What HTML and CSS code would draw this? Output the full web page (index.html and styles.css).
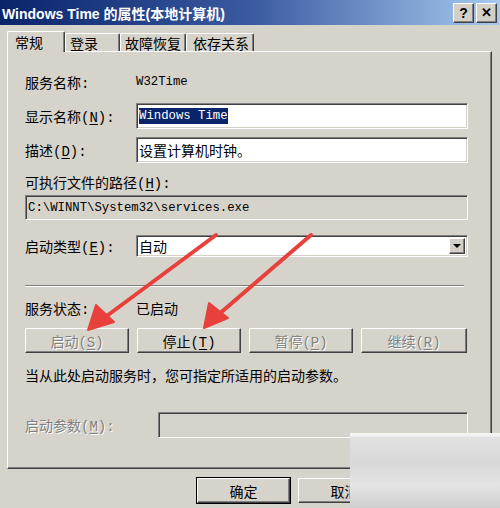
FILE: index.html
```html
<!DOCTYPE html>
<html lang="zh-CN">
<head>
    <meta charset="UTF-8">
    <title>Windows Time 的属性</title>
    <link rel="stylesheet" href="styles.css">
</head>
<body>

<div class="window">
    <div class="titlebar">
        <span class="title">Windows Time 的属性(本地计算机)</span>
        <div class="caption-buttons">
            <span class="cap-btn">?</span>
            <span class="cap-btn close">✕</span>
        </div>
    </div>

    <div class="tabs">
        <div class="tab active">常规</div>
        <div class="tab">登录</div>
        <div class="tab">故障恢复</div>
        <div class="tab">依存关系</div>
    </div>

    <div class="panel">
        <div class="row r-name">
            <span class="label">服务名称:</span>
            <span class="mono">W32Time</span>
        </div>
        <div class="row r-display">
            <span class="label">显示名称(<u>N</u>):</span>
            <div class="field"><span class="mono selected">Windows Time</span></div>
        </div>
        <div class="row r-desc">
            <span class="label">描述(<u>D</u>):</span>
            <div class="field">设置计算机时钟。</div>
        </div>
        <div class="row r-pathlabel">
            <span>可执行文件的路径(<u>H</u>):</span>
        </div>
        <div class="row r-path">
            <div class="field readonly"><span class="mono">C:\WINNT\System32\services.exe</span></div>
        </div>
        <div class="row r-type">
            <span class="label">启动类型(<u>E</u>):</span>
            <div class="field combo">
                <span>自动</span>
                <span class="drop"><span class="tri"></span></span>
            </div>
        </div>
        <div class="separator"></div>
        <div class="row r-status">
            <span class="label">服务状态:</span>
            <span>已启动</span>
        </div>
        <div class="row r-buttons">
            <button class="btn disabled">启动(<u>S</u>)</button>
            <button class="btn">停止(<u>T</u>)</button>
            <button class="btn disabled">暂停(<u>P</u>)</button>
            <button class="btn disabled wide">继续(<u>R</u>)</button>
        </div>
        <div class="row r-note">
            当从此处启动服务时，您可指定所适用的启动参数。
        </div>
        <div class="row r-params">
            <span class="label disabled-text">启动参数(<u>M</u>):</span>
            <div class="field readonly"></div>
        </div>
    </div>

    <div class="footer">
        <button class="btn dlg default">确定</button>
        <button class="btn dlg">取消</button>
        <button class="btn dlg">应用(<u>A</u>)</button>
    </div>

    <!-- red arrows pointing at the start / stop buttons -->
    <svg class="arrows" width="500" height="508" viewBox="0 0 500 508">
        <g fill="#e8413c" stroke="#e8413c" stroke-linecap="round" stroke-linejoin="round">
            <line x1="216" y1="235" x2="104" y2="318" stroke-width="4"/>
            <polygon points="88,330 96,305 114,322" stroke-width="2"/>
            <line x1="311" y1="235" x2="218" y2="315" stroke-width="4"/>
            <polygon points="204,328 209,303 228,318" stroke-width="2"/>
        </g>
    </svg>

    <div class="stamp"></div>
</div>

</body>
</html>
```

FILE: styles.css
```css
/* Win2000 style property sheet */
body { margin: 0; padding: 0; background: #d4d0c8; font-family: "Liberation Mono", "Noto Sans CJK SC", monospace; font-size: 14px; color: #000; }
u { text-decoration: underline; text-underline-offset: 2px; }
.window { position: relative; width: 500px; height: 508px; overflow: hidden; background: #d6d3ca; }

.titlebar { height: 25px; display: flex; align-items: center; justify-content: space-between; background: linear-gradient(to right, #0a246a 0%, #3a5aa0 50%, #a6caf0 100%); }
.title { color: #fff; font-family: "Liberation Sans", "Noto Sans CJK SC", sans-serif; font-weight: bold; font-size: 14px; padding-left: 2px; }
.caption-buttons { display: flex; gap: 2px; padding-right: 3px; }
.cap-btn { width: 19px; height: 18px; display: flex; align-items: center; justify-content: center; background: #d4d0c8; font-family: "Liberation Sans", sans-serif; font-weight: bold; font-size: 14px; border: 1px solid; border-color: #fff #404040 #404040 #fff; box-shadow: inset -1px -1px #808080; }
.cap-btn.close { font-size: 13px; }

.tabs { display: flex; padding-left: 7px; margin-top: 6px; height: 20px; align-items: flex-end; }
.tab { height: 18px; box-sizing: border-box; display: flex; align-items: center; white-space: nowrap; border-top: 1px solid #fff; border-left: 1px solid #fff; border-right: 1px solid #404040; border-radius: 2px 2px 0 0; box-shadow: inset -1px 0 #808080; }
.tab.active { height: 21px; margin-bottom: -1px; background: #d6d3ca; position: relative; z-index: 1; }
.tab:nth-child(1) { width: 58px; padding-left: 7px; }
.tab:nth-child(2) { width: 55px; padding-left: 4px; }
.tab:nth-child(3) { width: 66px; padding-left: 4px; }
.tab:nth-child(4) { width: 68px; padding-left: 6px; }

.panel { margin-left: 7px; width: 485px; height: 418px; box-sizing: border-box; padding: 0 23px 0 17px; border: 1px solid; border-color: #fff #404040 #404040 #fff; box-shadow: inset -1px -1px #808080; }

.row { display: flex; align-items: center; white-space: nowrap; }
.label { width: 111px; flex-shrink: 0; }
.mono { font-family: "Liberation Mono", monospace; font-size: 12.3px; }

.r-name { margin-top: 20px; height: 20px; }
.r-display { margin-top: 11px; height: 26px; }
.r-desc { margin-top: 8px; height: 26px; }
.r-pathlabel { margin-top: 9px; height: 20px; }
.r-path { margin-top: 3px; height: 25px; }
.r-type { margin-top: 15px; height: 22px; }
.r-status { margin-top: 11px; height: 20px; }
.r-buttons { margin-top: 10px; height: 25px; gap: 8px; }
.r-note { margin-top: 12px; height: 20px; }
.r-params { margin-top: 27px; height: 26px; }
.r-params .label { width: 133px; }

.field { flex: 1; height: 100%; box-sizing: border-box; display: flex; align-items: center; padding-left: 2px; background: #fff; border: 1px solid; border-color: #808080 #fff #fff #808080; box-shadow: inset 1px 1px #404040, inset -1px -1px #d4d0c8; }
.field.readonly { background: #d6d3ca; }
.selected { background: #0a246a; color: #fff; padding: 1px 0; }
.combo { justify-content: space-between; padding-right: 2px; }
.drop { width: 16px; height: 16px; box-sizing: border-box; display: flex; align-items: center; justify-content: center; background: #d4d0c8; border: 1px solid; border-color: #fff #404040 #404040 #fff; box-shadow: inset -1px -1px #808080; }
.tri { width: 0; height: 0; border-left: 4px solid transparent; border-right: 4px solid transparent; border-top: 4px solid #000; }

.separator { margin-top: 28px; height: 0; border-top: 1px solid #808080; border-bottom: 1px solid #fff; margin-right: 4px; }

.btn { height: 25px; width: 104px; padding: 0; font-family: inherit; font-size: 14px; color: #000; background: #d6d3ca; border: 1px solid; border-color: #fff #404040 #404040 #fff; box-shadow: inset -1px -1px #808080; }
.btn.wide { width: 106px; }
.btn.disabled, .disabled-text { color: #808080; text-shadow: 1px 1px 0 #fff; }

.footer { display: flex; gap: 8px; margin-top: 9px; padding-left: 197px; }
.btn.dlg { width: 93px; height: 25px; }
.btn.default { outline: 1px solid #000; outline-offset: 0; }

.arrows { position: absolute; left: 0; top: 0; pointer-events: none; }
.stamp { position: absolute; left: 350px; top: 433px; width: 150px; height: 75px; background: linear-gradient(to bottom, #f4f4f4 0, #f4f4f4 3px, #e2e2e2 4px, #d8d8d8 40%, #e4e4e4 70%, #cfcfcf 100%); }
```
